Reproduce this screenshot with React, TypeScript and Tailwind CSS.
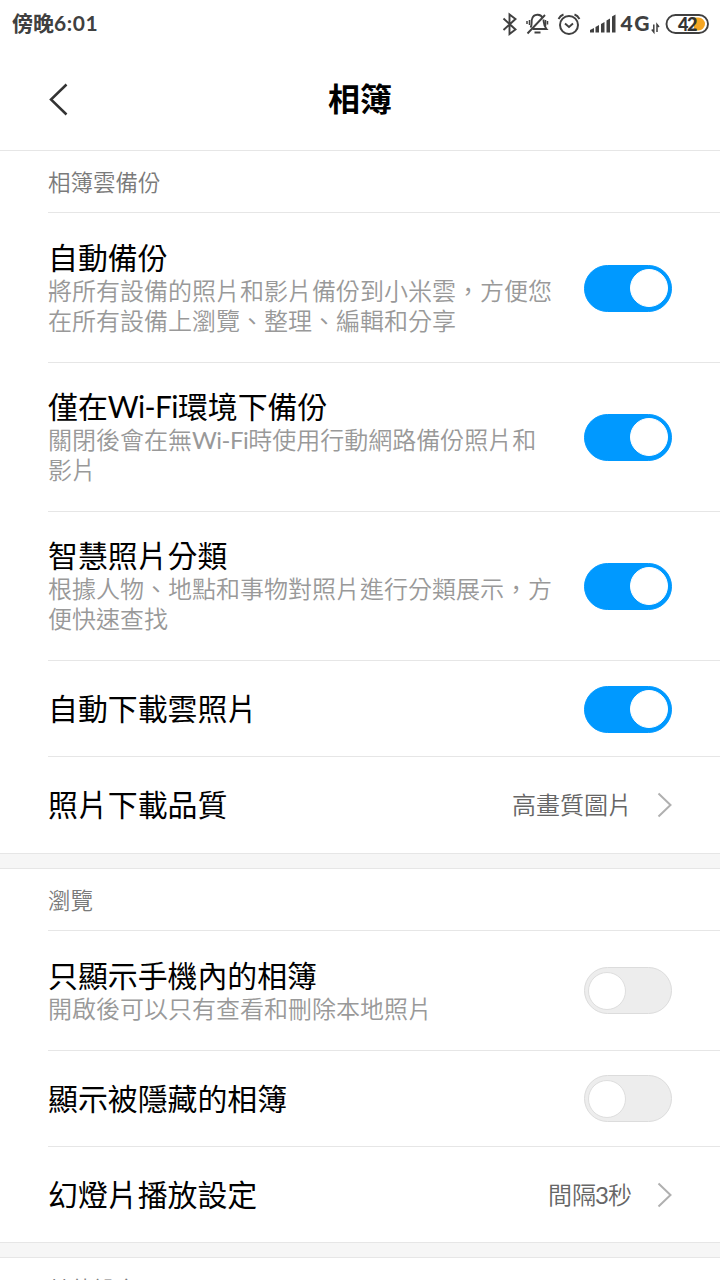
import React, { useState } from "react";
import clsx from "clsx";

interface ISwitchProps {
    label: string;
    initial: boolean;
}

const Switch: React.FC<ISwitchProps> = ({ label, initial }) => {
    const [on, setOn] = useState<boolean>(initial);

    return (
        <button
            type="button"
            role="switch"
            aria-checked={on}
            aria-label={label}
            onClick={() => setOn(!on)}
            className={clsx(
                "flex h-[47px] w-[88px] shrink-0 items-center rounded-full border px-[3px]",
                on ? "justify-end border-[#0099ff] bg-[#0099ff]" : "justify-start border-[#dcdcdc] bg-[#ededed]"
            )}
        >
            <span className={clsx("size-[38px] rounded-full border bg-white", on ? "border-white" : "border-[#dedede]")} />
        </button>
    );
};

interface IRowProps {
    title: React.ReactNode;
    label: string;
    description?: React.ReactNode;
    value?: React.ReactNode;
    checked?: boolean;
    height: string;
    last?: boolean;
}

const Row: React.FC<IRowProps> = ({ title, label, description, value, checked, height, last }) => (
    <div className={clsx("ml-12 flex items-center justify-between border-[#e6e6e6] pr-12", height, !last && "border-b")}>
        <div className="w-[504px]">
            <div className={clsx("text-[29.9px] whitespace-nowrap text-black", description ? "leading-[35px]" : "pb-0.5 leading-[34px]")}>{title}</div>
            {description && <div className="mt-px text-[24px] leading-[30px] font-[350] text-[#999]">{description}</div>}
        </div>
        {value ? (
            <div className="flex shrink-0 items-center text-[24px] leading-[30px] font-[350] text-[#666]">
                {value}
                <svg className="ml-6" width="16" height="28" viewBox="0 0 16 28" fill="none" stroke="#b0b0b0" strokeWidth="2">
                    <path d="M2.500 2.500 14.500 14 2.500 25.500" />
                </svg>
            </div>
        ) : (
            <Switch label={label} initial={checked === true} />
        )}
    </div>
);

const SectionTitle: React.FC<{ children: React.ReactNode }> = ({ children }) => (
    <div className="ml-12 flex h-[62px] items-center border-b border-[#e6e6e6] pt-0.5 text-[22.5px] font-[350] text-[#7a7a7a]">{children}</div>
);

const Gap = () => <div className="h-4 border-y border-[#e6e6e6] bg-[#f6f6f6]" />;

const WiFi = () => <span className="font-normal tracking-[-0.02em]">Wi-Fi</span>;

const StatusBar = () => (
    <div className="flex h-12 items-center justify-between pr-[11px] pb-0.5 pl-3 text-[21px] font-bold text-[#404040]">
        <div>傍晚<span className="tracking-[0.6px]">6:01</span></div>
        <svg className="mt-0.5" width="208" height="32" viewBox="501 8 208 32" fill="none" stroke="#404040" strokeWidth="1.9">
            {/* bluetooth */}
            <path d="m503.500 18.500 12 11-6 4.500V14.500l6 4.500-12 11" />
            {/* muted bell */}
            <path d="M530.500 27.500c2-2 .5-6 1.500-8.500 1.500-5.500 9-5.500 10.500-1M543.500 19.500c.5 4 0 6 3 9.500h-14M534.500 32.500h6" />
            <path d="m527.500 33.500 17.500-18.500" />
            <path strokeWidth="1.500" d="M529.500 20v5M527 21v3M545.500 20v6M547.500 21v3.500" />
            {/* alarm */}
            <circle cx="569" cy="25" r="9" strokeWidth="2" />
            <path d="m565 23.500 4 3.500 4-3.500M558.500 19c1.200-2.200 2.800-3.700 5-4.500M579.500 19c-1.200-2.200-2.800-3.700-5-4.500" />
            {/* signal */}
            <path fill="#404040" stroke="none" d="M590 32.500v-2.500l4-2v4.500zM595.500 32.500v-5.500l3.500-2v7.500zM601 32.500V24l3.500-2v10.500zM606.500 32.500V20.500l3.500-2v14zM612 32.500V16.500l3.500-2v18z" />
            <text x="620.500" y="31" fill="#404040" stroke="none" fontSize="21" fontFamily="Lato" fontWeight="900" textLength="29">4G</text>
            <path strokeWidth="1.500" d="M653.800 24.500v7.500l-2-2.500M657 32v-7.500l2 2.500" />
            {/* battery */}
            <path fill="#f5a623" stroke="none" d="M694 17.500h4.500a6.500 6.500 0 0 1 0 13H694z" />
            <rect x="666.500" y="15" width="41.500" height="18" rx="9" />
            <text x="678" y="30.500" fill="#333" stroke="none" fontSize="18" fontFamily="Lato" fontWeight="900" textLength="19.500">42</text>
        </svg>
    </div>
);

const App = () => {
    return (
        <div lang="zh-Hant" className="h-[1280px] w-full overflow-hidden bg-white font-['Lato','Noto_Sans_CJK_TC',sans-serif]">
            <StatusBar />
            <div className="grid h-[103px] grid-cols-[1fr_auto_1fr] items-center border-b border-[#e6e6e6] px-12">
                <button type="button" aria-label="返回">
                    <svg width="22" height="34" viewBox="0 0 22 34" fill="none" stroke="#333" strokeWidth="2.500">
                        <path d="M18.500 2.500 3 17.500l15.500 15" />
                    </svg>
                </button>
                <h1 className="pb-px text-[32px] font-bold text-black">相簿</h1>
            </div>

            <SectionTitle>相簿雲備份</SectionTitle>
            <Row height="h-[150px] pt-px" label="自動備份" title="自動備份" description="將所有設備的照片和影片備份到小米雲，方便您在所有設備上瀏覽、整理、編輯和分享" checked />
            <Row
                height="h-[149px]"
                label="僅在Wi-Fi環境下備份"
                title={<>僅在<WiFi />環境下備份</>}
                description={<>關閉後會在無<WiFi />時使用行動網路備份照片和影片</>}
                checked
            />
            <Row height="h-[149px]" label="智慧照片分類" title="智慧照片分類" description="根據人物、地點和事物對照片進行分類展示，方便快速查找" checked />
            <Row height="h-24 pt-px" label="自動下載雲照片" title="自動下載雲照片" checked />
            <Row height="h-24" label="照片下載品質" title="照片下載品質" value="高畫質圖片" last />
            <Gap />

            <SectionTitle>瀏覽</SectionTitle>
            <Row height="h-[120px]" label="只顯示手機內的相簿" title="只顯示手機內的相簿" description="開啟後可以只有查看和刪除本地照片" />
            <Row height="h-24" label="顯示被隱藏的相簿" title="顯示被隱藏的相簿" />
            <Row height="h-[95px]" label="幻燈片播放設定" title="幻燈片播放設定" value={<>間隔<span className="-ml-px font-normal tracking-[-1px]">3</span>秒</>} last />
            <Gap />

            <SectionTitle>其他設定</SectionTitle>
        </div>
    );
};

export default App;
